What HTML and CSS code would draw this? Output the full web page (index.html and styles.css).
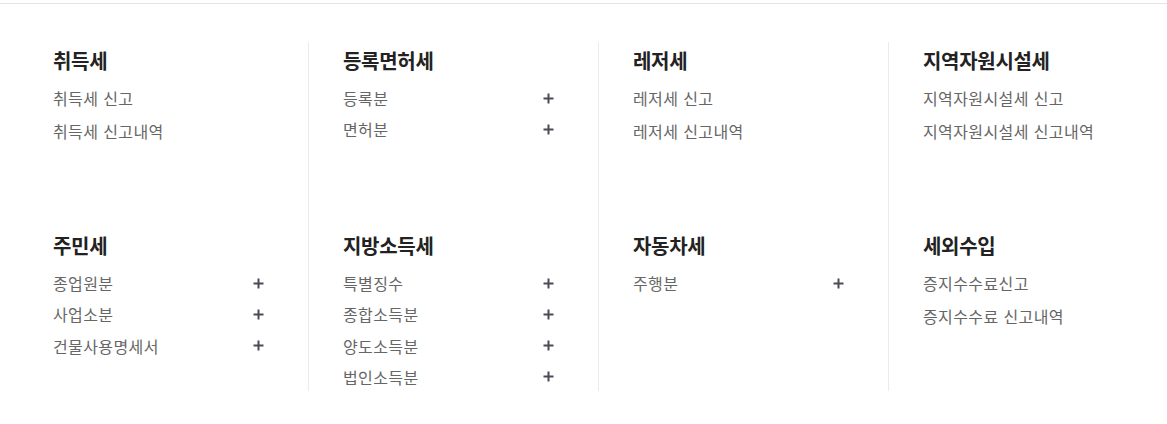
FILE: index.html
```html
<!DOCTYPE html>
<html lang="ko">
<head>
<meta charset="utf-8">
<link rel="stylesheet" href="styles.css">
</head>
<body>
<div class="topbar"></div>
<div class="menu">
  <section class="cell">
    <h3 class="title">취득세</h3>
    <ul class="list">
      <li class="link">취득세 신고</li>
      <li class="link">취득세 신고내역</li>
    </ul>
  </section>
  <section class="cell">
    <h3 class="title">등록면허세</h3>
    <ul class="list">
      <li class="more">등록분<svg class="plus" viewBox="0 0 11 11"><path d="M5.5 0.5v10M0.5 5.5h10"/></svg></li>
      <li class="more">면허분<svg class="plus" viewBox="0 0 11 11"><path d="M5.5 0.5v10M0.5 5.5h10"/></svg></li>
    </ul>
  </section>
  <section class="cell">
    <h3 class="title">레저세</h3>
    <ul class="list">
      <li class="link">레저세 신고</li>
      <li class="link">레저세 신고내역</li>
    </ul>
  </section>
  <section class="cell">
    <h3 class="title">지역자원시설세</h3>
    <ul class="list">
      <li class="link">지역자원시설세 신고</li>
      <li class="link">지역자원시설세 신고내역</li>
    </ul>
  </section>

  <section class="cell">
    <h3 class="title">주민세</h3>
    <ul class="list">
      <li class="more">종업원분<svg class="plus" viewBox="0 0 11 11"><path d="M5.5 0.5v10M0.5 5.5h10"/></svg></li>
      <li class="more">사업소분<svg class="plus" viewBox="0 0 11 11"><path d="M5.5 0.5v10M0.5 5.5h10"/></svg></li>
      <li class="more">건물사용명세서<svg class="plus" viewBox="0 0 11 11"><path d="M5.5 0.5v10M0.5 5.5h10"/></svg></li>
    </ul>
  </section>
  <section class="cell">
    <h3 class="title">지방소득세</h3>
    <ul class="list">
      <li class="more">특별징수<svg class="plus" viewBox="0 0 11 11"><path d="M5.5 0.5v10M0.5 5.5h10"/></svg></li>
      <li class="more">종합소득분<svg class="plus" viewBox="0 0 11 11"><path d="M5.5 0.5v10M0.5 5.5h10"/></svg></li>
      <li class="more">양도소득분<svg class="plus" viewBox="0 0 11 11"><path d="M5.5 0.5v10M0.5 5.5h10"/></svg></li>
      <li class="more">법인소득분<svg class="plus" viewBox="0 0 11 11"><path d="M5.5 0.5v10M0.5 5.5h10"/></svg></li>
    </ul>
  </section>
  <section class="cell">
    <h3 class="title">자동차세</h3>
    <ul class="list">
      <li class="more">주행분<svg class="plus" viewBox="0 0 11 11"><path d="M5.5 0.5v10M0.5 5.5h10"/></svg></li>
    </ul>
  </section>
  <section class="cell">
    <h3 class="title">세외수입</h3>
    <ul class="list">
      <li class="link">증지수수료신고</li>
      <li class="link">증지수수료 신고내역</li>
    </ul>
  </section>
</div>
</body>
</html>
```
FILE: styles.css
```css
html, body {
  margin: 0;
  padding: 0;
  background: #fff;
}
body {
  font-family: "Noto Sans CJK KR", "Noto Sans", sans-serif;
  color: #666;
  overflow: hidden;
}
.topbar {
  height: 3px;
  border-bottom: 1px solid #e3e3e3;
}
.menu {
  display: grid;
  grid-template-columns: 290px 290px 290px 1fr;
  grid-template-rows: 185px auto;
  padding-left: 18px;
  margin-top: 38px;
}
.cell {
  border-left: 1px solid #ebebeb;
  padding: 4px 44px 3px 34px;
}
.cell:nth-child(4n+1) {
  border-left-color: transparent;
}
.title {
  margin: 0;
  font-size: 20px;
  line-height: 30px;
  font-weight: 700;
  color: #222;
  letter-spacing: -0.3px;
}
.list {
  list-style: none;
  margin: 11px 0 0;
  padding: 0;
}
.list li {
  font-size: 16px;
  line-height: 22px;
  letter-spacing: 0.4px;
  color: #666;
  white-space: nowrap;
}
.link + .link {
  margin-top: 11px;
}
.more {
  display: flex;
  align-items: center;
  justify-content: space-between;
}
.more + .more {
  margin-top: 9.33px;
}
.plus {
  width: 11px;
  height: 11px;
  fill: none;
  stroke: #4a4b55;
  stroke-width: 2;
}
```
